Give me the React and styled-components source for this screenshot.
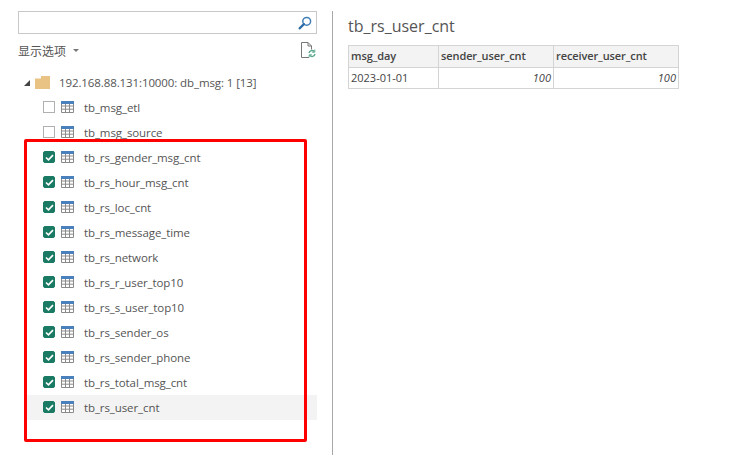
import React from 'react'
import styled, { createGlobalStyle } from 'styled-components'

const GlobalStyle = createGlobalStyle`
  html, body {
    margin: 0;
    padding: 0;
    background: #fff;
  }
  body {
    font-family: "Open Sans", "Noto Sans CJK SC", sans-serif;
    color: #444;
  }
`

const Page = styled.div`
  position: relative;
  width: 745px;
  height: 455px;
  overflow: hidden;
  display: flex;
  padding: 11px 0 0 18px;
  box-sizing: border-box;
`

const Sidebar = styled.div`
  width: 299px;
  flex-shrink: 0;
  display: flex;
  flex-direction: column;
`

const SearchBox = styled.div`
  height: 23px;
  border: 1px solid #c8c8c8;
  box-sizing: border-box;
  display: flex;
  align-items: center;
  justify-content: flex-end;
  padding-right: 4px;
`

const OptionsBar = styled.div`
  height: 25px;
  margin-top: 4px;
  display: flex;
  align-items: center;
  justify-content: space-between;
  padding-right: 1px;
`

const OptionsLabel = styled.div`
  font-size: 12px;
  color: #555;
  display: flex;
  align-items: center;
  gap: 7px;
`

const Caret = styled.span`
  width: 0;
  height: 0;
  border-left: 3px solid transparent;
  border-right: 3px solid transparent;
  border-top: 3px solid #777;
`

const Tree = styled.div`
  margin-top: 7px;
  display: flex;
  flex-direction: column;
`

const ServerRow = styled.div`
  height: 25px;
  display: flex;
  align-items: center;
  padding-left: 6px;
  font-size: 11.5px;
  color: #555;
`

const Expander = styled.span`
  width: 0;
  height: 0;
  border-left: 6px solid transparent;
  border-bottom: 6px solid #444;
  margin-right: 5px;
`

const ServerLabel = styled.span`
  margin-left: 9px;
  letter-spacing: -0.1px;
`

const TableRow = styled.div`
  height: 25px;
  margin-left: 9px;
  padding-left: 16px;
  display: flex;
  align-items: center;
  background: ${({ $active }) => ($active ? '#f3f3f3' : 'transparent')};
`

const CheckBox = styled.span`
  width: 12px;
  height: 12px;
  flex-shrink: 0;
  box-sizing: border-box;
  border-radius: ${({ $checked }) => ($checked ? '2px' : '0')};
  border: 1px solid ${({ $checked }) => ($checked ? '#1a7a63' : '#b0b0b0')};
  background: ${({ $checked }) => ($checked ? '#1a7a63' : '#fff')};
  display: flex;
  align-items: center;
  justify-content: center;
  margin-top: -1px;
`

const TableName = styled.span`
  margin-left: 10px;
  font-size: 11.5px;
  color: #555;
  letter-spacing: -0.1px;
  white-space: nowrap;
`

const Divider = styled.div`
  width: 1px;
  height: 444px;
  margin-left: 15px;
  background: #a8a8a8;
  flex-shrink: 0;
`

const Preview = styled.div`
  margin-left: 15px;
  display: flex;
  flex-direction: column;
  align-items: flex-start;
`

const Title = styled.h2`
  margin: 3px 0 0;
  height: 24px;
  line-height: 24px;
  font-size: 16px;
  font-weight: 400;
  color: #555;
`

const DataTable = styled.table`
  margin-top: 7px;
  border-collapse: collapse;
  table-layout: fixed;
  width: 330px;
  font-size: 11px;
  color: #444;
`

const HeaderCell = styled.th`
  width: ${({ $w }) => $w}px;
  height: 22px;
  padding: 0 2px 2px;
  box-sizing: border-box;
  border: 1px solid #d4d4d4;
  background: #f3f3f3;
  text-align: left;
  font-weight: 600;
  font-size: 11px;
  letter-spacing: -0.1px;
  white-space: nowrap;
`

const Cell = styled.td`
  height: 21px;
  padding: 0 2px 1px;
  box-sizing: border-box;
  border: 1px solid #d4d4d4;
  text-align: ${({ $num }) => ($num ? 'right' : 'left')};
  font-style: ${({ $num }) => ($num ? 'italic' : 'normal')};
`

const Highlight = styled.div`
  position: absolute;
  left: 24px;
  top: 139px;
  width: 283px;
  height: 303px;
  box-sizing: border-box;
  border: 3px solid #f00;
  border-radius: 2px;
  pointer-events: none;
`

const SearchIcon = () => (
  <svg width="14" height="14" viewBox="0 0 14 14" fill="none">
    <circle cx="8.7" cy="5.3" r="3.9" stroke="#3f7fb8" strokeWidth="1.5" />
    <path d="M5.9 8.1 1.6 12.4" stroke="#2f6fa8" strokeWidth="2.2" strokeLinecap="round" />
  </svg>
)

const RefreshFileIcon = () => (
  <svg width="15" height="17" viewBox="0 0 15 17" fill="none">
    <path d="M8 15.5H.5V.5h6.5l3.5 3.5v3.5M7 .5V4h3.5" stroke="#777" strokeWidth="1" />
    <path d="M8 11a3 3 0 0 1 5.2-1.4M14 12a3 3 0 0 1-5.2 1.4" stroke="#5aa88c" strokeWidth="1.4" />
    <path d="M13.8 7.6v2.6h-2.6M8.2 15.4v-2.6h2.6" stroke="#5aa88c" strokeWidth="1" />
  </svg>
)

const FolderIcon = () => (
  <svg width="15" height="13" viewBox="0 0 15 13">
    <path d="M0 2.5h6V0h9v13H0z" fill="#e8c383" />
  </svg>
)

const TableIconSvg = styled.svg`
  width: 13px;
  height: 12px;
  margin: -1px 0 0 6px;
  flex-shrink: 0;
`

const TableIcon = () => (
  <TableIconSvg viewBox="0 0 13 12">
    <rect x="0" y="0" width="13" height="12" fill="#fff" />
    <path
      d="M.5 2v9.5h12V2M.5 5h12M.5 8.2h12M4.5 3v8.5M8.5 3v8.5"
      fill="none"
      stroke="#8a8a8a"
      strokeWidth="1"
    />
    <rect x="0" y="0" width="13" height="3" fill="#4a81bd" />
  </TableIconSvg>
)

const CheckMark = () => (
  <svg width="9" height="7" viewBox="0 0 10 8" fill="none">
    <path d="M1 4 3.8 6.6 9 1.2" stroke="#fff" strokeWidth="1.9" />
  </svg>
)

const tables = [
  { name: 'tb_msg_etl', checked: false },
  { name: 'tb_msg_source', checked: false },
  { name: 'tb_rs_gender_msg_cnt', checked: true },
  { name: 'tb_rs_hour_msg_cnt', checked: true },
  { name: 'tb_rs_loc_cnt', checked: true },
  { name: 'tb_rs_message_time', checked: true },
  { name: 'tb_rs_network', checked: true },
  { name: 'tb_rs_r_user_top10', checked: true },
  { name: 'tb_rs_s_user_top10', checked: true },
  { name: 'tb_rs_sender_os', checked: true },
  { name: 'tb_rs_sender_phone', checked: true },
  { name: 'tb_rs_total_msg_cnt', checked: true },
  { name: 'tb_rs_user_cnt', checked: true, active: true },
]

const App = () => {
  return (
    <Page>
      <GlobalStyle />
      <Sidebar>
        <SearchBox>
          <SearchIcon />
        </SearchBox>
        <OptionsBar>
          <OptionsLabel>
            显示选项
            <Caret />
          </OptionsLabel>
          <RefreshFileIcon />
        </OptionsBar>
        <Tree>
          <ServerRow>
            <Expander />
            <FolderIcon />
            <ServerLabel>192.168.88.131:10000: db_msg: 1 [13]</ServerLabel>
          </ServerRow>
          {tables.map((table) => (
            <TableRow key={table.name} $active={table.active}>
              <CheckBox $checked={table.checked}>{table.checked && <CheckMark />}</CheckBox>
              <TableIcon />
              <TableName>{table.name}</TableName>
            </TableRow>
          ))}
        </Tree>
      </Sidebar>
      <Divider />
      <Preview>
        <Title>tb_rs_user_cnt</Title>
        <DataTable>
          <thead>
            <tr>
              <HeaderCell $w={90}>msg_day</HeaderCell>
              <HeaderCell $w={115}>sender_user_cnt</HeaderCell>
              <HeaderCell $w={125}>receiver_user_cnt</HeaderCell>
            </tr>
          </thead>
          <tbody>
            <tr>
              <Cell>2023-01-01</Cell>
              <Cell $num>100</Cell>
              <Cell $num>100</Cell>
            </tr>
          </tbody>
        </DataTable>
      </Preview>
      <Highlight />
    </Page>
  )
}

export default App
